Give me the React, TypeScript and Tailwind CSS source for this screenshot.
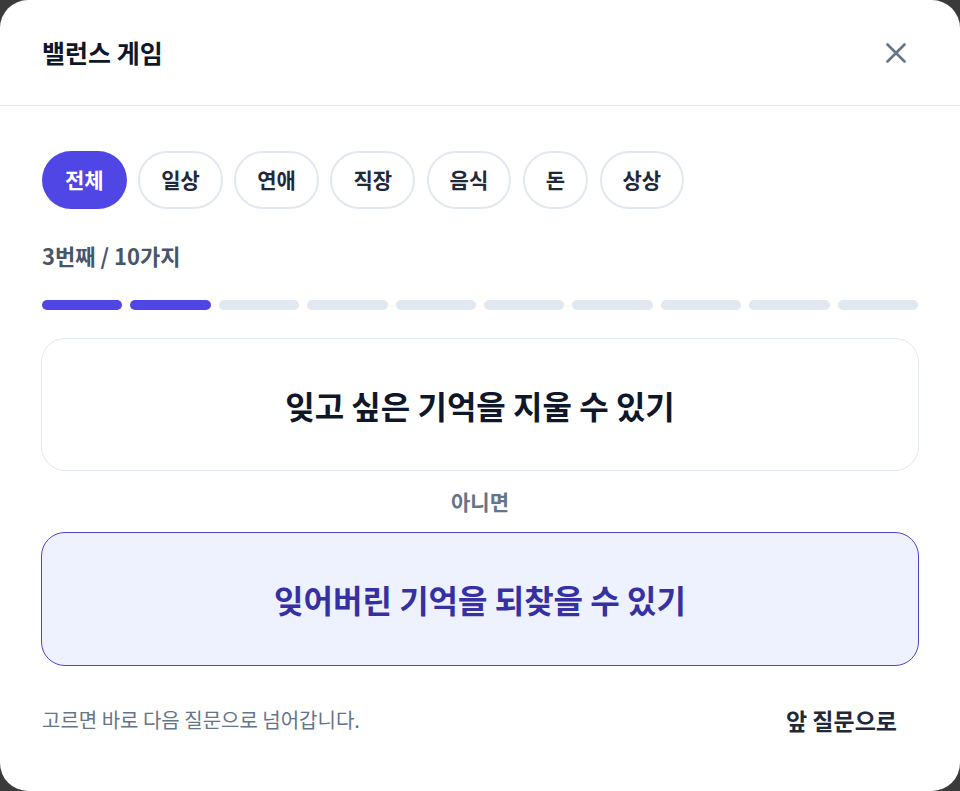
import React from "react";

const font = { fontFamily: '"Noto Sans CJK KR", "Noto Sans", sans-serif' };

const categories = ["전체", "일상", "연애", "직장", "음식", "돈", "상상"];

export default function App() {
  return (
    <div className="w-[960px] h-[791px] bg-[#3a3a3a]" style={font}>
      <div className="w-full h-full bg-white rounded-[28px] flex flex-col overflow-hidden">
        <div className="h-[106px] shrink-0 px-[42px] flex items-center justify-between border-b border-[#e2e8f0]">
          <h1 className="text-[25px] leading-[32px] font-bold text-[#0f172a] mt-[-2px]">밸런스 게임</h1>
          <button className="w-[40px] h-[40px] flex items-center justify-center mr-[2px]">
            <svg width="20" height="20" viewBox="0 0 20 20" fill="none">
              <path d="M1.5 1.5 L18.5 18.5 M18.5 1.5 L1.5 18.5" stroke="#64748b" strokeWidth="2.6" strokeLinecap="round" />
            </svg>
          </button>
        </div>
        <div className="px-[41px] pt-[45px] flex flex-col">
          <div className="flex gap-[11.5px] pl-[1px]">
            {categories.map((c, i) => (
              <div
                key={c}
                className={
                  i === 0
                    ? "h-[58px] px-[23px] rounded-full bg-[#4f46e5] text-white text-[21px] font-bold flex items-center"
                    : "h-[58px] px-[21px] rounded-full border-2 border-[#e2e8f0] text-[#1e293b] text-[21px] font-bold flex items-center"
                }
              >
                {c}
              </div>
            ))}
          </div>
          <div className="mt-[32px] pl-[1px] text-[22px] leading-[28px] font-bold text-[#475569]">3번째 / 10가지</div>
          <div className="mt-[31px] grid grid-cols-10 gap-[8px] px-[1px]">
            {Array.from({ length: 10 }).map((_, i) => (
              <div key={i} className={i < 2 ? "h-[10px] rounded-full bg-[#4f46e5]" : "h-[10px] rounded-full bg-[#e2e8f0]"} />
            ))}
          </div>
          <button className="mt-[28px] h-[133px] rounded-[24px] border-[1.5px] border-[#e2e8f0] bg-white flex items-center justify-center text-[32px] font-bold text-[#0f172a]">
            잊고 싶은 기억을 지울 수 있기
          </button>
          <div className="mt-[16px] text-center text-[21px] leading-[28px] font-bold text-[#64748b]">아니면</div>
          <button className="mt-[17px] h-[134px] rounded-[24px] border-[1.5px] border-[#4b45d0] bg-[#eef2ff] flex items-center justify-center text-[32px] font-bold text-[#3730a3]">
            잊어버린 기억을 되찾을 수 있기
          </button>
          <div className="mt-[34px] flex items-center justify-between pl-[1px]">
            <span className="text-[20px] leading-[26px] text-[#64748b]">고르면 바로 다음 질문으로 넘어갑니다.</span>
            <button className="px-[22px] h-[40px] text-[23px] font-bold text-[#1e293b]">앞 질문으로</button>
          </div>
        </div>
      </div>
    </div>
  );
}
